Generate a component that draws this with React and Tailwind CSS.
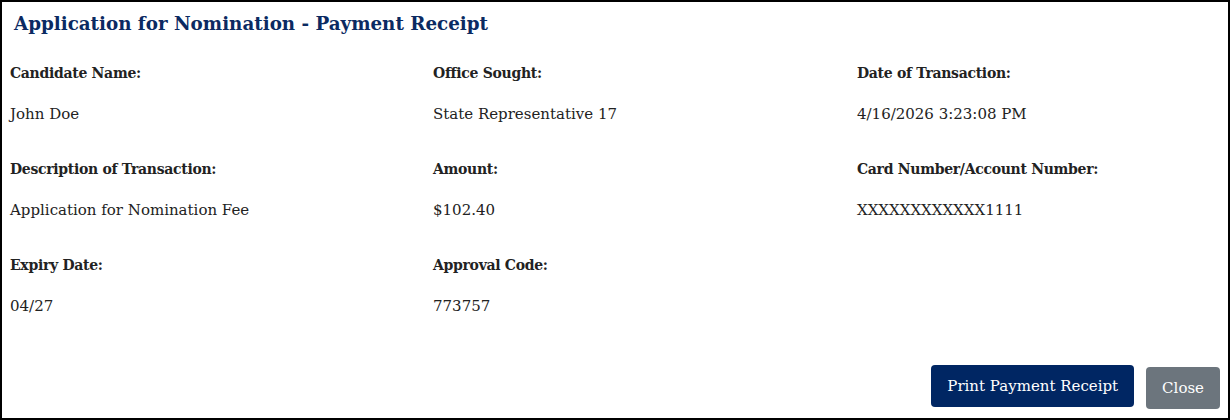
import React from 'react';

const fields = [
  { label: 'Candidate Name:', value: 'John Doe' },
  { label: 'Office Sought:', value: 'State Representative 17' },
  { label: 'Date of Transaction:', value: '4/16/2026 3:23:08 PM' },
  { label: 'Description of Transaction:', value: 'Application for Nomination Fee' },
  { label: 'Amount:', value: '$102.40' },
  { label: 'Card Number/Account Number:', value: 'XXXXXXXXXXXX1111' },
  { label: 'Expiry Date:', value: '04/27' },
  { label: 'Approval Code:', value: '773757' },
];

const Field = ({ label, value }) => (
  <div className="h-[96px]">
    <div className="text-[14px] tracking-[-0.3px] font-bold text-[#222] leading-[20px]">{label}</div>
    <div className="mt-[21px] text-[15px] text-[#222] leading-[20px]">{value}</div>
  </div>
);

export default function App() {
  return (
    <div
      className="w-[1230px] h-[420px] border-2 border-black bg-white flex flex-col"
      style={{ fontFamily: '"DejaVu Serif", "Liberation Serif", serif' }}
    >
      <h1 className="pl-[12px] pt-[9px] text-[18.3px] font-bold leading-[26px] text-[#0b2a62]">
        Application for Nomination - Payment Receipt
      </h1>
      <div className="mt-[26px] pl-[8px] grid grid-cols-[423px_424px_1fr]">
        {fields.map((f) => (
          <Field key={f.label} label={f.label} value={f.value} />
        ))}
      </div>
      <div className="mt-auto flex justify-end items-end gap-[12px] pr-[8px] pb-[9px]">
        <button className="h-[42px] px-[16px] rounded-[4px] bg-[#002663] text-white text-[15px] mb-[2px]">
          Print Payment Receipt
        </button>
        <button className="h-[42px] px-[16px] rounded-[4px] bg-[#6c757d] text-white text-[15px]">
          Close
        </button>
      </div>
    </div>
  );
}
